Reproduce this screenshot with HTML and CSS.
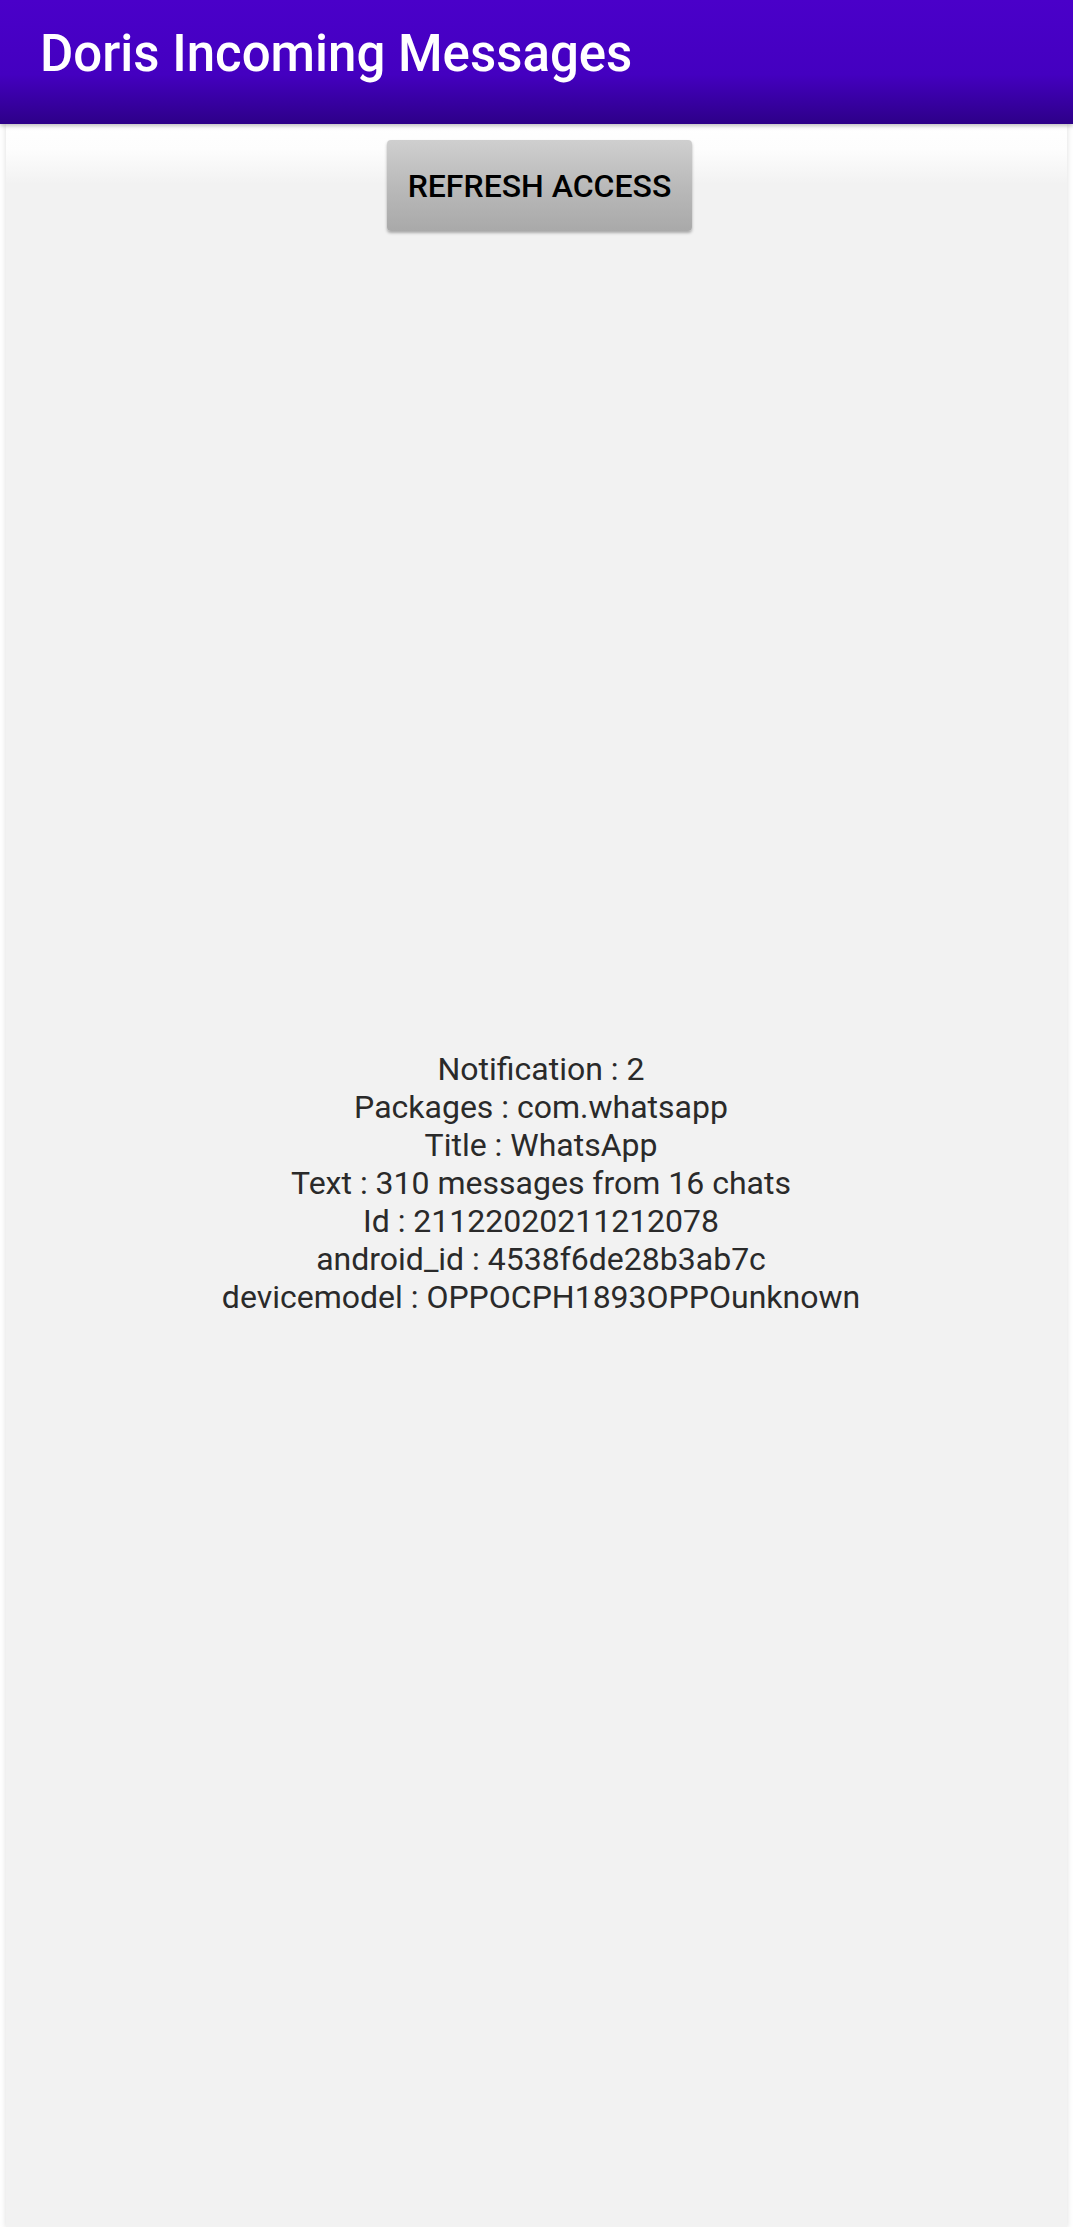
FILE: index.html
```html
<!DOCTYPE html>
<html>
<head>
<meta charset="utf-8">
<link rel="stylesheet" href="styles.css">
</head>
<body>
<header class="appbar">
  <h1 class="title">Doris Incoming Messages</h1>
</header>
<main class="panel">
  <button class="refresh">REFRESH ACCESS</button>
  <div class="info">
    <div>Notification : 2</div>
    <div>Packages : com.whatsapp</div>
    <div>Title : WhatsApp</div>
    <div>Text : 310 messages from 16 chats</div>
    <div>Id : 21122020211212078</div>
    <div>android_id : 4538f6de28b3ab7c</div>
    <div>devicemodel : OPPOCPH1893OPPOunknown</div>
  </div>
</main>
</body>
</html>
```
FILE: styles.css
```css
html, body {
  margin: 0;
  padding: 0;
  background: #ffffff;
  font-family: Roboto, "Liberation Sans", sans-serif;
}
.appbar {
  height: 124px;
  background: linear-gradient(to bottom, #4a00c9 0%, #4400c0 60%, #2d0088 100%);
  box-shadow: 0 2px 4px rgba(0,0,0,0.25);
  position: relative;
  z-index: 2;
  box-sizing: border-box;
  padding: 24px 0 0 40px;
}
.title {
  margin: 0;
  color: #ffffff;
  font-size: 51px;
  font-weight: 500;
  line-height: 60px;
}
.panel {
  margin: 0 6px;
  height: 2103px;
  background: linear-gradient(to bottom, #ffffff 0px, #fdfdfd 25px, #f2f2f2 60px, #f2f2f2 100%);
  box-shadow: 0 1px 6px rgba(0,0,0,0.14);
  display: grid;
  grid-template-areas: "stack";
  justify-items: center;
}
.refresh {
  grid-area: stack;
  align-self: start;
  margin-top: 16px;
  margin-left: 6px;
  width: 305px;
  height: 91px;
  border: none;
  border-radius: 4px;
  background: linear-gradient(to bottom, #cfcfcf 0%, #bababa 50%, #a9a9a9 100%);
  box-shadow: 0 2px 3px rgba(0,0,0,0.3);
  font-family: Roboto, "Liberation Sans", sans-serif;
  font-size: 32px;
  font-weight: 500;
  color: #000000;
  padding: 0;
}
.info {
  grid-area: stack;
  align-self: center;
  margin-top: 14px;
  margin-left: 9px;
  text-align: center;
  color: #2a2a2a;
  font-size: 32px;
  line-height: 38px;
}
```
